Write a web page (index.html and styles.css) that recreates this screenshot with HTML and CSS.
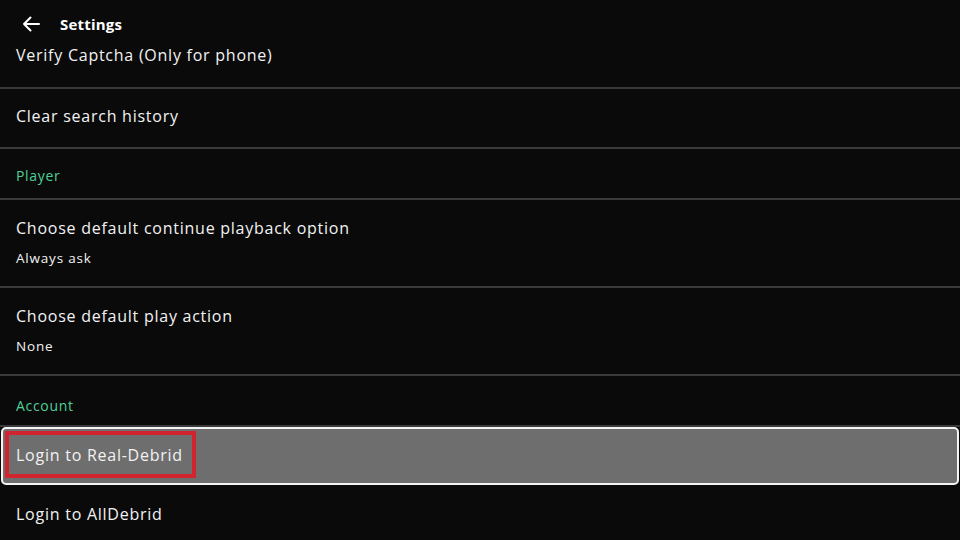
FILE: index.html
```html
<!DOCTYPE html>
<html lang="en">
<head>
    <meta charset="UTF-8">
    <meta name="viewport" content="width=device-width, initial-scale=1.0">
    <title>Settings</title>
    <link rel="stylesheet" href="styles.css">
</head>
<body>
    <header class="topbar">
        <svg class="back" width="18" height="16" viewBox="0 0 18 16">
            <path d="M17 8H2M8.5 1.5L2 8l6.5 6.5" fill="none" stroke="#fff" stroke-width="2" stroke-linecap="round" stroke-linejoin="round"/>
        </svg>
        <h1>Settings</h1>
    </header>

    <div class="list">
        <div class="item first"><span class="title">Verify Captcha (Only for phone)</span></div>
        <div class="item"><span class="title">Clear search history</span></div>
        <div class="category">Player</div>
        <div class="item double">
            <span class="title">Choose default continue playback option</span>
            <span class="summary">Always ask</span>
        </div>
        <div class="item double">
            <span class="title">Choose default play action</span>
            <span class="summary">None</span>
        </div>
        <div class="category account">Account</div>
        <div class="item focused">
            <span class="title">Login to Real-Debrid</span>
            <div class="highlight"></div>
        </div>
        <div class="item plain"><span class="title">Login to AllDebrid</span></div>
    </div>
</body>
</html>
```

FILE: styles.css
```css
body { margin: 0; background: #0a0a0a; color: #f2f2f2; font-family: "Open Sans", Arial, sans-serif; overflow: hidden; }

.topbar { height: 40px; display: flex; align-items: center; padding-left: 22px; padding-top: 8px; box-sizing: border-box; }
.topbar .back { margin-right: 20px; }
.topbar h1 { font-size: 15px; font-weight: 700; margin: 0; color: #fff; letter-spacing: 0.2px; }

.list { display: flex; flex-direction: column; }
.item { display: flex; flex-direction: column; justify-content: center; padding-left: 16px; padding-bottom: 5px; height: 60px; border-bottom: 2px solid #3a3a3a; position: relative; box-sizing: border-box; }
.item.first { height: 49px; justify-content: flex-start; padding-top: 4px; padding-bottom: 0; }
.item.double { height: 88px; justify-content: flex-start; padding-top: 17px; padding-bottom: 0; }
.item.plain { border-bottom: none; padding-bottom: 2px; }
.title { font-size: 16px; letter-spacing: 0.75px; }
.summary { font-size: 13.5px; margin-top: 10px; letter-spacing: 0.8px; }

.category { height: 51px; display: flex; align-items: center; padding-left: 16px; padding-top: 4px; box-sizing: border-box; font-size: 14px; color: #4fcf97; border-bottom: 2px solid #3a3a3a; letter-spacing: 0.7px; }
.category.account { padding-top: 9px; }

.item.focused { height: 58px; margin: 0 1px; padding-left: 13px; padding-bottom: 3px; background: #6e6e6e; border: 2px solid #f4f4f4; border-radius: 5px; }
.highlight { position: absolute; left: 2px; top: 2px; width: 191px; height: 47px; border: 4px solid #d1242f; box-sizing: border-box; }
```
